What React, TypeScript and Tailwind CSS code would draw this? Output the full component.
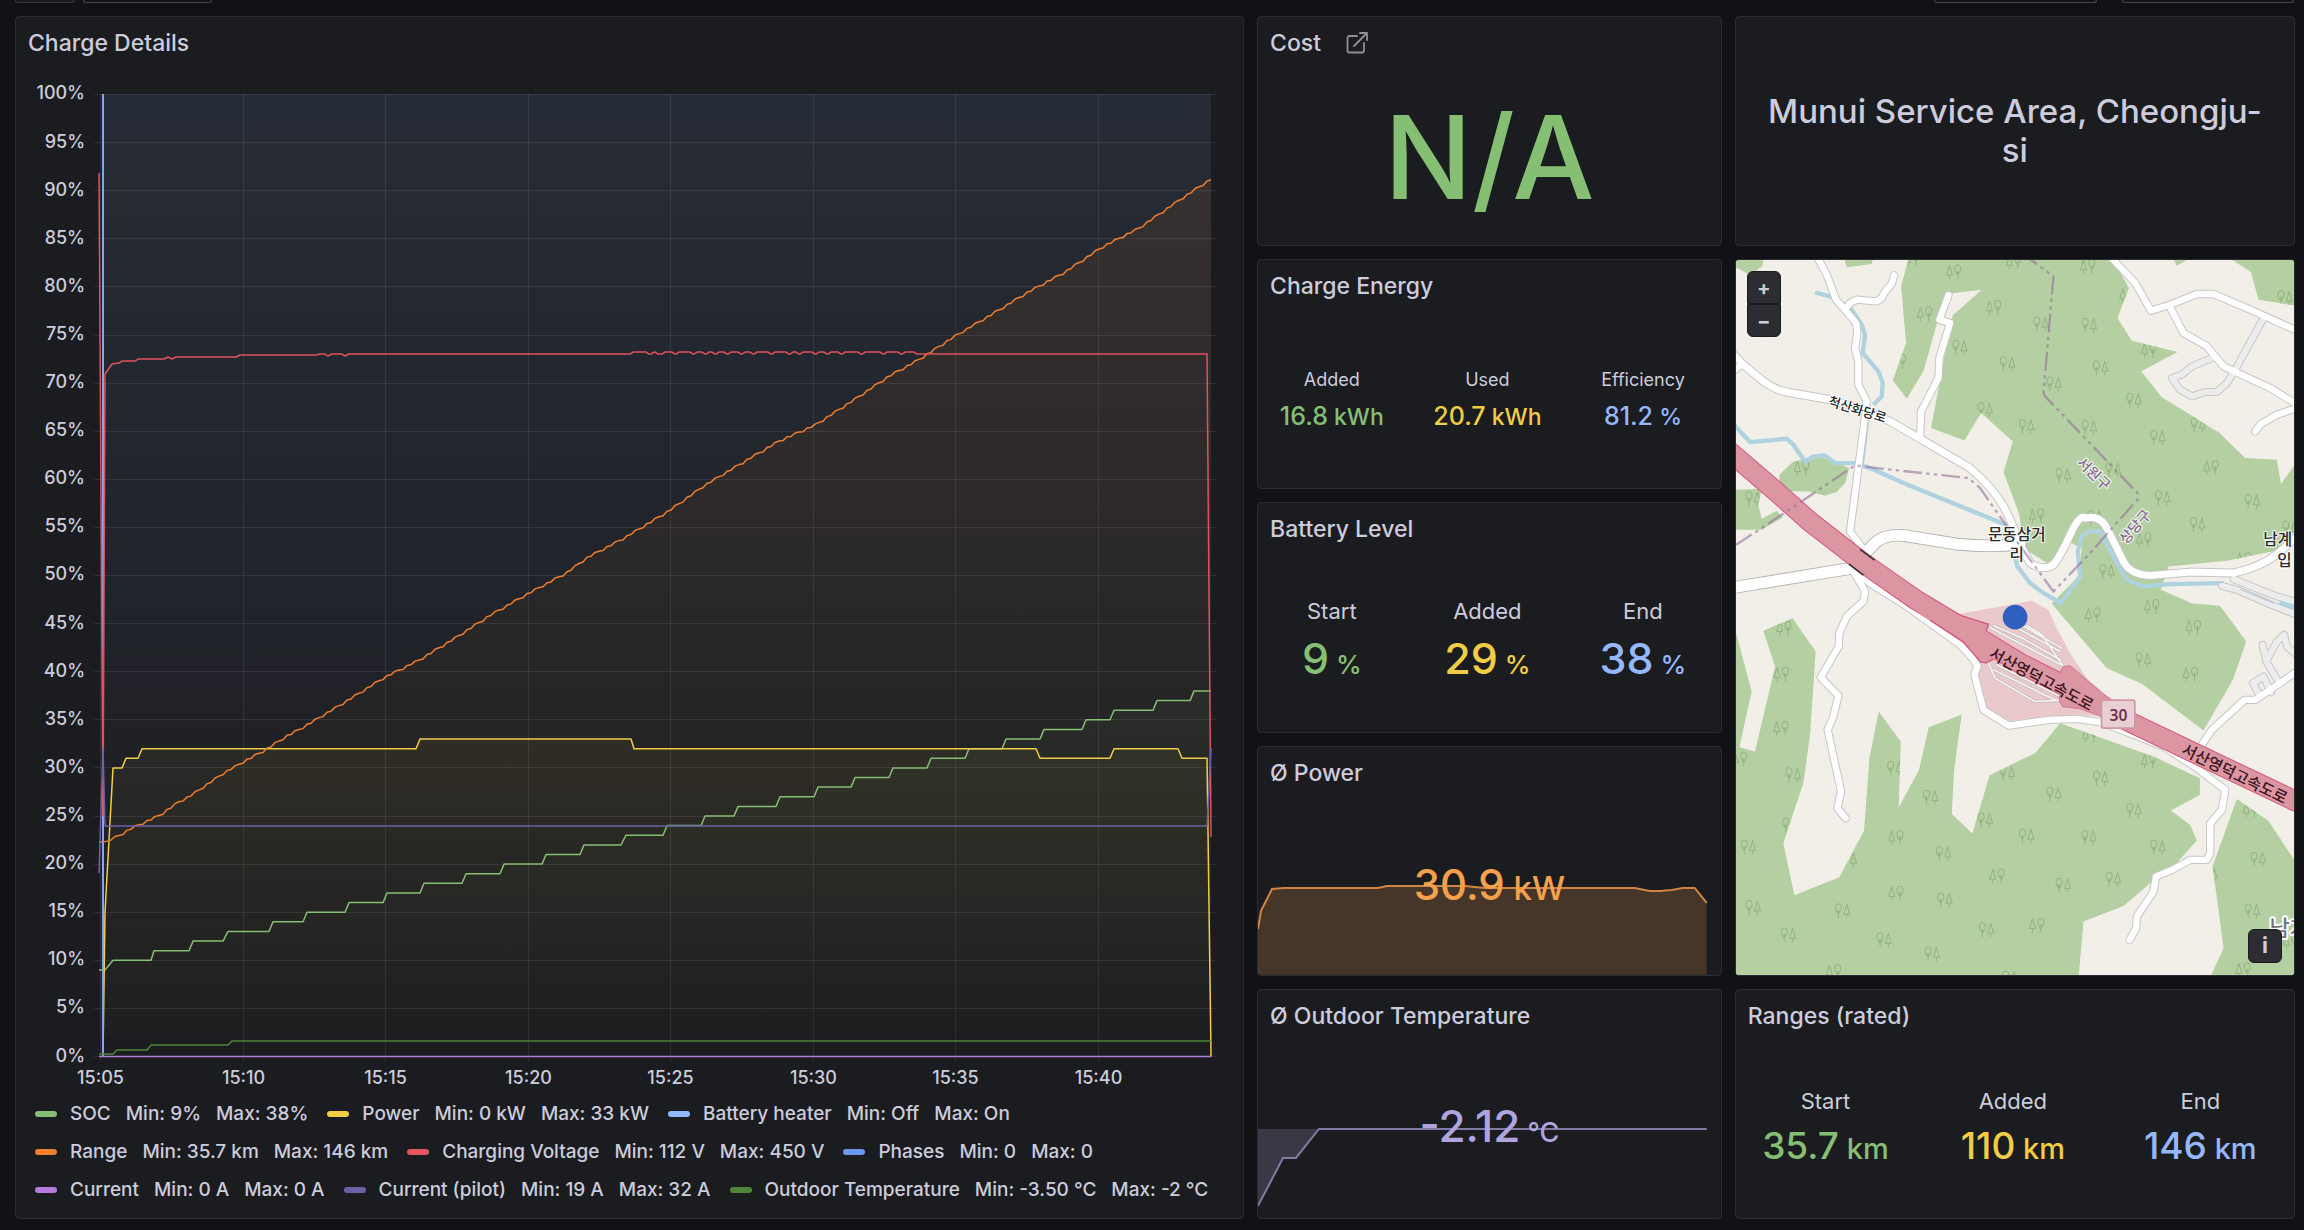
import React from "react";

const FONT = "font-['Inter','Noto_Sans_CJK_KR',sans-serif]";
const KR = "'Noto Sans CJK KR', sans-serif";

type PanelProps = {
  title?: string;
  action?: React.ReactNode;
  className: string;
  children: React.ReactNode;
};

function Panel({ title, action, className, children }: PanelProps) {
  return (
    <section className={`relative flex min-w-0 flex-col overflow-hidden rounded-sm border border-[#2c2d32] bg-[#1b1c1f] ${className}`}>
      {title && (
        <header className="flex h-[52px] shrink-0 items-center gap-6 px-3">
          <h2 className="text-[23px] font-medium leading-8 text-[#ccccdc]">{title}</h2>
          {action}
        </header>
      )}
      {children}
    </section>
  );
}

/* ---------- Time series ---------- */

const TOP = 94.5;
const BOTTOM = 1056.5;
const pct = (v: number) => BOTTOM - (v * (BOTTOM - TOP)) / 100;
type Pt = [number, number];
const line = (pts: Pt[]) => "M" + pts.map(([x, y]) => `${x} ${y.toFixed(1)}`).join("L");
const area = (pts: Pt[]) => `${line(pts)}L${pts[pts.length - 1][0]} ${BOTTOM}L${pts[0][0]} ${BOTTOM}Z`;

const socSteps: [number, number, number][] = [
  [9, 99, 105], [10, 113, 151], [11, 154, 189], [12, 193, 223], [13, 228, 269], [14, 273, 303],
  [15, 307, 345], [16, 349, 383], [17, 387, 420], [18, 424, 462], [19, 466, 500], [20, 504, 542],
  [21, 546, 580], [22, 584, 621], [23, 626, 663], [24, 667, 701], [25, 705, 734], [26, 738, 776],
  [27, 780, 814], [28, 818, 851], [29, 855, 889], [30, 893, 927], [31, 931, 965], [32, 969, 1002],
  [33, 1006, 1040], [34, 1044, 1082], [35, 1086, 1110], [36, 1114, 1153], [37, 1157, 1190], [38, 1194, 1211],
];
const soc: Pt[] = socSteps.flatMap(([v, a, b]): Pt[] => [[a, pct(v)], [b, pct(v)]]);

const power: Pt[] = (
  [
    [103, 0], [105, 15], [113, 30], [122, 30], [126, 31], [138, 31], [142, 32], [416, 32], [420, 33],
    [631, 33], [634, 32], [1036, 32], [1040, 31], [1110, 31], [1114, 32], [1178, 32], [1182, 31],
    [1207, 31], [1211, 0],
  ] as Pt[]
).map(([x, v]): Pt => [x, pct(v)]);

const rangeKeys: Pt[] = [
  [99, 842], [105, 842], [118, 836], [130, 829], [160, 815], [180, 801], [190, 796], [212, 781],
  [222, 774], [241, 763], [265, 750], [285, 737], [300, 729], [320, 717], [340, 705], [385, 677],
  [419, 660], [455, 638], [492, 614], [529, 593], [566, 573], [588, 557], [624, 538], [670, 510],
  [705, 485], [735, 467], [779, 441], [815, 425], [852, 401], [889, 376], [918, 360], [955, 336],
  [992, 314], [1028, 292], [1065, 272], [1102, 247], [1139, 228], [1175, 203], [1197, 188], [1211, 179],
];
function stepped(keys: Pt[]): Pt[] {
  const out: Pt[] = [];
  const wobble = [0, 1.4, -0.6, 0.8, -0.9];
  let i = 0;
  for (let x = keys[0][0], n = 0; x <= 1211; x += 4, n++) {
    while (i < keys.length - 2 && keys[i + 1][0] < x) i++;
    const [x0, y0] = keys[i];
    const [x1, y1] = keys[i + 1];
    out.push([x, y0 + ((y1 - y0) * (x - x0)) / (x1 - x0) + (n > 2 ? wobble[n % 5] : 0)]);
  }
  return out;
}
const range = stepped(rangeKeys);

const ripple: Pt[] = [
  630, 646, 651, 655, 662, 672, 676, 690, 694, 702, 706, 712, 716, 724, 728, 738, 742, 750, 754, 768,
  772, 786, 790, 796, 800, 812, 816, 824, 828, 838, 842, 858, 862, 880, 884, 898, 902, 914,
].flatMap((x, i): Pt[] => (i % 2 ? [[x, 352], [x + 3, 354]] : [[x, 354], [x + 3, 352]]));
const voltage: Pt[] = [
  [99, 173], [103, 816], [105, 374], [112, 364], [119, 363], [122, 361], [135, 361], [138, 359],
  [164, 359], [168, 357], [172, 359], [176, 357], [236, 357], [240, 355], [316, 355], [320, 354],
  [325, 354], [328, 356], [332, 354], [342, 354], [345, 356], [349, 354], ...ripple, [1207, 354], [1211, 837],
];
const pilot: Pt[] = [[99, 873], [103, 748], [105, 826], [1207, 826], [1211, 748]];
const outdoor: Pt[] = [[99, 1054], [113, 1054], [117, 1050], [147, 1050], [151, 1045], [228, 1045], [232, 1041], [1211, 1041]];
const times = ["15:05", "15:10", "15:15", "15:20", "15:25", "15:30", "15:35", "15:40"];
const timeX = [100.5, 243.5, 385.5, 528.5, 670.5, 813.5, 955.5, 1098.5];

function Gradient({ id, color, from, y }: { id: string; color: string; from: number; y: number }) {
  return (
    <linearGradient id={id} gradientUnits="userSpaceOnUse" x1="0" x2="0" y1={y} y2={BOTTOM}>
      <stop offset="0" stopColor={color} stopOpacity={from} />
      <stop offset="1" stopColor={color} stopOpacity="0" />
    </linearGradient>
  );
}

function ChargeChart() {
  return (
    <svg viewBox="16 69 1227 1025" className="block h-auto w-full" fill="none" role="img" aria-label="Charge Details">
      <defs>
        <Gradient id="gHeater" color="#8ab8ff" from={0.1} y={94} />
        <Gradient id="gRange" color="#ff780a" from={0.08} y={179} />
        <Gradient id="gPower" color="#fade2a" from={0.05} y={739} />
        <Gradient id="gSoc" color="#73bf69" from={0.05} y={691} />
      </defs>
      <g stroke="#ccccdc" strokeOpacity="0.11">
        {Array.from({ length: 21 }, (_, i) => {
          const y = Math.round(pct(i * 5) - 0.5) + 0.5;
          return <path key={i} d={`M94 ${y}H1216`} />;
        })}
        {timeX.map((x) => (
          <path key={x} d={`M${x} 94V1062`} />
        ))}
      </g>
      <path d={`M103 94H1211V${BOTTOM}H103Z`} fill="url(#gHeater)" />
      <path d={area(range)} fill="url(#gRange)" />
      <path d={area(power)} fill="url(#gPower)" />
      <path d={area(soc)} fill="url(#gSoc)" />
      <g strokeWidth="1.5" strokeLinejoin="round">
        <path d={line(soc)} stroke="#85bf73" />
        <path d={line(power)} stroke="#f0cd45" />
        <path d={`M103 94V${BOTTOM}`} stroke="#82a8f0" strokeWidth="2" />
        <path d={line(range)} stroke="#ee7d2f" />
        <path d={line(voltage)} stroke="#e0525c" />
        <path d={line(pilot)} stroke="#6e60a4" />
        <path d={line(outdoor)} stroke="#4c8438" />
        <path d={`M99 ${BOTTOM}H1211`} stroke="#b07ad8" />
      </g>
      <g fill="#ccccdc" fontSize="18" fontWeight="500" fontFamily="Inter, sans-serif">
        {Array.from({ length: 21 }, (_, i) => (
          <text key={i} x="85" y={pct(i * 5) + 5} textAnchor="end">{`${i * 5}%`}</text>
        ))}
        {times.map((t, i) => (
          <text key={t} x={timeX[i]} y="1084" textAnchor="middle">{t}</text>
        ))}
      </g>
    </svg>
  );
}

const legend = [
  { name: "SOC", min: "9%", max: "38%", color: "bg-[#85bf73]" },
  { name: "Power", min: "0 kW", max: "33 kW", color: "bg-[#f0cd45]" },
  { name: "Battery heater", min: "Off", max: "On", color: "bg-[#94b8fb]" },
  { name: "Range", min: "35.7 km", max: "146 km", color: "bg-[#f08030]" },
  { name: "Charging Voltage", min: "112 V", max: "450 V", color: "bg-[#e3555f]" },
  { name: "Phases", min: "0", max: "0", color: "bg-[#6a98f0]" },
  { name: "Current", min: "0 A", max: "0 A", color: "bg-[#b47bdc]" },
  { name: "Current (pilot)", min: "19 A", max: "32 A", color: "bg-[#6e60a4]" },
  { name: "Outdoor Temperature", min: "-3.50 °C", max: "-2 °C", color: "bg-[#4f873a]" },
];

function Legend() {
  return (
    <ul className="flex flex-wrap gap-x-[19px] px-[19px] pt-px text-[19px] font-medium text-[#ccccdc]">
      {legend.map((s) => (
        <li key={s.name} className="flex h-[38px] items-center whitespace-nowrap">
          <span className={`mr-[13px] h-[6px] w-[22px] rounded-full ${s.color}`} />
          <button type="button" className="mr-[15px]">{s.name}</button>
          <span className="mr-[15px]">Min: {s.min}</span>
          <span>Max: {s.max}</span>
        </li>
      ))}
    </ul>
  );
}

/* ---------- Stat panels ---------- */

type Stat = { label: string; value: string; unit: string; color: string };
type StatSize = { label: string; value: string; unit: string };

const sizes: Record<"small" | "large" | "medium", StatSize> = {
  small: { label: "text-[18px] leading-7", value: "text-[25px] leading-[44px]", unit: "text-[23px]" },
  large: { label: "text-[22px] leading-8", value: "text-[43px] leading-[62px]", unit: "text-[26px]" },
  medium: { label: "text-[22px] leading-8", value: "text-[37px] leading-[58px]", unit: "text-[29px]" },
};

function StatRow({ stats, size }: { stats: Stat[]; size: keyof typeof sizes }) {
  const s = sizes[size];
  return (
    <dl className="-ml-1 grid flex-1 grid-cols-3 content-center pt-1 text-center">
      {stats.map((st) => (
        <div key={st.label}>
          <dt className={`text-[#ccccdc] ${s.label}`}>{st.label}</dt>
          <dd className={`whitespace-pre font-medium ${s.value} ${st.color}`}>
            {st.value}
            <span className={s.unit}> {st.unit}</span>
          </dd>
        </div>
      ))}
    </dl>
  );
}

const GREEN = "text-[#85bf73]";
const YELLOW = "text-[#f0cd45]";
const BLUE = "text-[#94b8fb]";

function ExternalLinkIcon() {
  return (
    <svg viewBox="0 0 24 24" className="size-6" fill="none" stroke="#8f909b" strokeWidth="1.8" strokeLinecap="round" strokeLinejoin="round">
      <path d="M12 5H4.500a2 2 0 0 0-2 2v12.500a2 2 0 0 0 2 2H17a2 2 0 0 0 2-2V12M9 15 22 2M15 2h7v7" />
    </svg>
  );
}

/* ---------- Map ---------- */

const forests = [
  "M18 15H100L97 35 60 62 18 38Z",
  "M343 15 350 38 425 28 428 15Z",
  "M535 15 513 95 528 265 488 377 530 432 580 350 625 190 648 118 755 105 668 182 640 320 603 520 703 557 753 475 848 560 820 652 868 780 880 880 950 925 985 905 1023 865 1055 880 1045 965 965 1045 980 1065 1130 1240 1235 1287 1420 1427 1508 1275 1548 1160 1478 1065 1468 1053 1385 1045 1292 1005 1315 935 1490 918 1640 887 1692 830V632L1652 688 1640 615 1545 610 1468 535 1380 480 1295 428 1233 350 1342 292 1205 258 1162 190 1196 100 1150 15Z",
  "M1505 15 1562 52 1585 135 1692 153V15Z",
  "M1330 15 1340 33 1372 15Z",
  "M190 620 270 605 358 640 345 685 320 712 285 723 235 710 150 708 148 660Z",
  "M18 705 95 702 85 750 95 792 140 768 158 788 95 825H18Z",
  "M18 1133 65 1310 28 1477 75 1490 135 1235 100 1128 188 1090 257 1190 240 1440 220 1585 160 1765 193 1921 328 1867 402 1727 418 1510 446 1370 512 1460 506 1658 567 1545 596 1417 695 1379 672 1545 665 1677 727 1736 778 1562 870 1516 915 1495 990 1405 1270 1505 1409 1570V1620L1322 1667 1380 1710 1400 1757 1320 1845 1260 1885 1180 1953 1060 2000 1046 2160H18Z",
  "M1520 1632 1615 1698 1692 1815V2160H1443L1480 2080 1465 1965 1447 1835Z",
];

const rivers = [
  "M255 113 310 128 365 165 395 210 405 240 398 295 445 350 458 385 455 425 430 450",
  "M10 508 60 562 170 552 190 570 225 620 250 605 285 602 315 625 375 625 420 640 520 685 840 815 855 840",
  "M855 910 862 935 900 985 940 1015 992 1045 1050 965 1043 890 1055 845 1075 830H1110L1130 870 1190 975 1240 995 1320 988 1480 985",
];

const minorRoads = [
  "M258 0 290 60 318 135 345 165 378 205 382 230 375 280 385 320V390L410 440 403 500 360 830 405 890",
  "M345 165 360 145 380 135 440 140 455 130 465 110 485 88 492 62",
  "M0 355 38 328",
  "M570 552 573 470 625 370 628 310 660 205 628 195 655 122",
  "M370 950 405 1010 400 1040 350 1085 328 1135 326 1175 272 1268 325 1322 310 1385 293 1425 333 1610 322 1660 347 1690",
  "M370 950 430 992 520 1048 600 1105 690 1170 725 1208 742 1234 733 1260 760 1365 835 1412 960 1395 1040 1392 1110 1402 1180 1428 1300 1475 1400 1540 1485 1605 1475 1665 1440 1705V1795L1430 1815H1380L1325 1845 1277 1865 1270 1910 1220 1985 1218 2020 1198 2055",
  "M1135 0 1215 85 1262 168 1320 150 1400 118H1450L1560 165 1700 228",
  "M1318 155 1360 235 1430 275 1480 335 1620 400 1700 449",
  "M1575 530 1592 508 1640 480 1700 460",
  "M1415 1470 1445 1425 1543 1335H1575L1700 1250",
];
const mainRoads = [
  "M0 288 38 328 100 380Q140 408 170 412L300 435 400 465 480 500 570 552 720 640Q790 700 820 755T865 860L900 925Q940 950 970 930 990 905 1020 840T1065 790Q1110 780 1130 820L1180 920Q1200 960 1260 962L1380 952 1510 955Q1600 935 1650 890L1700 845",
];
const wideRoads = ["M400 900 440 860Q470 838 520 842L680 868Q780 878 870 868", "M0 1000 355 942 385 938"];
const greyRoads = [
  "M1600 190 1515 345 1490 385 1460 412 1425 412 1385 425 1350 405 1325 370 1355 360 1385 335 1450 308",
  "M1475 993 1520 1005 1635 1055 1700 1080",
  "M1510 973 1640 1025 1700 1042",
  "M1590 1325 1568 1285 1600 1265 1622 1312",
  "M1642 1275 1608 1220 1597 1170",
  "M1608 1218 1640 1160 1662 1140 1670 1175 1700 1200",
];

const roundFirst: Pt[] = [
  [690, 278], [833, 327], [766, 465], [70, 732], [933, 208], [1078, 212], [1112, 340], [972, 388],
  [1212, 437], [890, 515], [1078, 518], [1284, 548], [1000, 662], [1150, 645], [1298, 730], [1567, 740],
  [1403, 810], [1131, 950], [1665, 130], [1095, 788], [190, 1560], [56, 1777], [70, 1958], [176, 2040],
  [338, 1968], [463, 2055], [607, 2097], [602, 1627], [641, 1796], [645, 1935], [770, 2025], [766, 1695],
  [495, 1540], [832, 1555], [358, 1815], [1240, 1215], [1112, 1570], [972, 1618], [1212, 1667],
  [890, 1743], [1077, 1748], [1284, 1777], [1150, 1873], [1000, 1891], [1585, 1813], [1567, 1968],
  [1440, 1860], [1405, 510], [840, 2170], [180, 1710], [1680, 820],
];
const pineFirst: Pt[] = [
  [670, 52], [583, 178], [790, 158], [214, 640], [1072, 35], [1255, 287], [1442, 638], [919, 783],
  [1240, 855], [1264, 1055], [1087, 1080], [161, 1120], [153, 1258], [152, 1420], [28, 1513], [310, 2150],
  [497, 1748], [800, 1863], [497, 1915], [1389, 1117], [1380, 1258], [1255, 1518], [919, 2011],
  [1538, 2145], [545, 12], [850, 22], [505, 320], [1078, 1440], [1190, 122], [1540, 915], [1560, 1665], [1680, 2060],
];

const HIGHWAY = "M-10 583 130 703 240 801 400 925 560 1037 690 1115 780 1170 870 1225 990 1286 1110 1348 1180 1393 1692 1637 1720 1650";

function MapView() {
  return (
    <svg viewBox="18 15 1674 2145" preserveAspectRatio="xMidYMid slice" className="absolute inset-0 size-full" fill="none" strokeLinejoin="round">
      <defs>
        <clipPath id="forest">
          <path d={forests.join("")} />
        </clipPath>
        <g id="treeRound">
          <path d="M0 22V-4M-5 4 0 9 5 4" />
          <ellipse cx="0" cy="-9" rx="9" ry="12" />
        </g>
        <path id="treePine" d="M0 22V10M0-20-9 10H9Z" />
      </defs>
      <rect x="0" y="0" width="1720" height="2180" fill="#f2efe9" />
      <path d={forests.join("")} fill="#b4cfa1" />
      <path d="M640 1070 690 1077 840 1050 905 1038 955 1065 980 1120 1020 1195 1080 1285 1115 1385 1040 1380 840 1405 765 1360 740 1250 740 1160Z" fill="#e9c9cb" />
      <g clipPath="url(#forest)" stroke="#93b484" strokeWidth="3">
        {roundFirst.map(([x, y]) => (
          <React.Fragment key={`${x}-${y}`}>
            <use href="#treeRound" x={x - 13} y={y} />
            <use href="#treePine" x={x + 12} y={y} />
          </React.Fragment>
        ))}
        {pineFirst.map(([x, y]) => (
          <React.Fragment key={`${x}-${y}`}>
            <use href="#treePine" x={x - 12} y={y} />
            <use href="#treeRound" x={x + 13} y={y} />
          </React.Fragment>
        ))}
      </g>
      <g stroke="#aed3df" strokeWidth="13">
        {rivers.map((d) => (
          <path key={d} d={d} />
        ))}
        <path d="M415 490 398 628" strokeWidth="8" />
      </g>
      <g strokeLinecap="round">
        <g stroke="#c6c6c6">
          {greyRoads.map((d) => <path key={d} d={d} strokeWidth="24" />)}
          {minorRoads.map((d) => <path key={d} d={d} strokeWidth="25" />)}
          {mainRoads.map((d) => <path key={d} d={d} strokeWidth="27" />)}
          {wideRoads.map((d) => <path key={d} d={d} strokeWidth="38" stroke="#b0b0ae" />)}
        </g>
        {greyRoads.map((d) => <path key={d} d={d} strokeWidth="18" stroke="#ececec" />)}
        <g stroke="#fff">
          {minorRoads.map((d) => <path key={d} d={d} strokeWidth="19" />)}
          {mainRoads.map((d) => <path key={d} d={d} strokeWidth="21" />)}
          {wideRoads.map((d) => <path key={d} d={d} strokeWidth="33" />)}
        </g>
      </g>
      <path d="M1530 1003 1630 1045" stroke="#b9cdd2" strokeWidth="4" />
      <path d="M1648 1044 1700 1060" stroke="#aed3df" strokeWidth="14" />
      <g strokeLinecap="round">
        {["#c4b9b9", "#f7f5f4"].map((c, i) => (
          <path
            key={c}
            stroke={c}
            strokeWidth={i ? 5 : 9}
            d="M780 1118 840 1150 990 1228M790 1112 880 1152 990 1215M840 1108 990 1190M870 1108 995 1180M890 1112 935 1140 998 1232M775 1225 795 1270 915 1340 990 1336M790 1245 980 1338M800 1230 985 1322"
          />
        ))}
      </g>
      <path d={HIGHWAY} stroke="#d4577f" strokeWidth="62" />
      <path d="M640 1066 775 1108 767 1132 860 1190 800 1210 768 1224 752 1222 700 1162 560 1072Z" fill="#dc96a2" />
      <path d="M640 1066 775 1108 767 1132M600 1096 700 1162 752 1222 768 1224 790 1212" stroke="#d4577f" strokeWidth="4" />
      <path d="M990 1250 1000 1235 1020 1233 1135 1330 1180 1400 1130 1390 1050 1362 998 1356 988 1340Z" fill="#dc96a2" stroke="#d27a90" strokeWidth="3" />
      <path d={HIGHWAY} stroke="#dc96a2" strokeWidth="56" />
      <path d="M390 884 434 916M357 928 400 961" stroke="#333" strokeWidth="5" />
      <path
        d="M18 870 95 820 200 750 375 632 440 640 715 670 750 700 830 815 860 860 970 1010 1075 900 1150 815 1222 735V715L945 425 940 415 970 65 895 10"
        stroke="#94709b"
        strokeOpacity="0.6"
        strokeWidth="7"
        strokeDasharray="56 13 10 13 10 13"
      />
      <g fontFamily={KR} fontWeight="500" paintOrder="stroke" stroke="#fff" strokeOpacity="0.8" strokeWidth="7" textAnchor="middle">
        <g fill="#222" fontSize="39">
          <text transform="translate(378 478) rotate(17)">척산화당로</text>
        </g>
        <g fill="#2a2a2a" fontSize="47">
          <text x="860" y="855">문동삼거</text>
          <text x="860" y="917">리</text>
          <text x="1599" y="871" textAnchor="start">남계</text>
          <text x="1641" y="933" textAnchor="start">입</text>
        </g>
        <g fill="#866b91" fontSize="43">
          <text transform="translate(1080 668) rotate(44)">서원구</text>
          <text transform="translate(1226 826) rotate(-49)">상당구</text>
        </g>
        <text x="1618" y="2042" fill="#777" fontSize="66" strokeWidth="12" strokeOpacity="1" textAnchor="start">남계</text>
      </g>
      <g fontFamily={KR} fontWeight="500" fill="#3a1420" fontSize="47" textAnchor="middle">
        <text transform="translate(926 1288) rotate(28)">서산영덕고속도로</text>
        <text transform="translate(1506 1572) rotate(26)">서산영덕고속도로</text>
      </g>
      <rect x="1114" y="1336" width="100" height="84" rx="7" fill="#e8cfd3" stroke="#cf98a4" strokeWidth="5" />
      <text x="1165" y="1397" textAnchor="middle" fill="#70304c" fontFamily="Noto Sans, sans-serif" fontWeight="600" fontSize="47">30</text>
      <circle cx="855" cy="1087" r="37" fill="#3060bf" />
    </svg>
  );
}

const mapButton = "flex items-center justify-center border border-[#1a1b1f] bg-[#2c2d33] font-bold text-[#ccccdc]";

export default function App() {
  return (
    <div className={`flex min-h-screen flex-col bg-[#111216] ${FONT}`}>
      <div className="flex h-4 items-start justify-between pl-[15px] pr-[10px]">
        <div className="flex gap-2">
          <div className="h-[3px] w-[60px] rounded-b-sm border border-t-0 border-[#35363b] bg-[#1b1c1f]" />
          <div className="h-[3px] w-[129px] rounded-b-sm border border-t-0 border-[#47484d]" />
        </div>
        <div className="flex gap-[25px]">
          <div className="h-[3px] w-[163px] rounded-b-sm border border-t-0 border-[#47484d]" />
          <div className="h-[3px] w-[172px] rounded-b-sm border border-t-0 border-[#47484d]" />
        </div>
      </div>

      <main className="grid flex-1 grid-cols-24 grid-rows-[repeat(5,minmax(230px,1fr))] gap-[13px] pb-[11px] pl-[15px] pr-[9px]">
        <Panel title="Charge Details" className="col-span-13 row-span-5">
          <ChargeChart />
          <Legend />
        </Panel>

        <Panel
          title="Cost"
          className="col-span-5"
          action={
            <a href="#cost" aria-label="Cost">
              <ExternalLinkIcon />
            </a>
          }
        >
          <p className="flex flex-1 items-center justify-center text-[116px] font-medium leading-[120px] text-[#85bf73]">N/A</p>
        </Panel>

        <Panel className="col-span-6">
          <h1 className="flex flex-1 items-center justify-center px-7 text-center text-[33px] font-medium leading-[39px] text-[#ccccdc]">
            Munui Service Area, Cheongju-si
          </h1>
        </Panel>

        <Panel title="Charge Energy" className="col-span-5">
          <StatRow
            size="small"
            stats={[
              { label: "Added", value: "16.8", unit: "kWh", color: GREEN },
              { label: "Used", value: "20.7", unit: "kWh", color: YELLOW },
              { label: "Efficiency", value: "81.2", unit: "%", color: BLUE },
            ]}
          />
        </Panel>

        <Panel className="col-span-6 row-span-3">
          <MapView />
          <div className="absolute left-[11px] top-[11px] flex w-[34px] flex-col">
            <button type="button" className={`h-[33px] rounded-t-md text-xl ${mapButton}`}>+</button>
            <button type="button" className={`h-[33px] rounded-b-md text-xl ${mapButton}`}>−</button>
          </div>
          <button type="button" className={`absolute bottom-3 right-3 size-[34px] rounded-md text-[22px] ${mapButton}`}>i</button>
        </Panel>

        <Panel title="Battery Level" className="col-span-5">
          <StatRow
            size="large"
            stats={[
              { label: "Start", value: "9", unit: "%", color: GREEN },
              { label: "Added", value: "29", unit: "%", color: YELLOW },
              { label: "End", value: "38", unit: "%", color: BLUE },
            ]}
          />
        </Panel>

        <Panel title="Ø Power" className="col-span-5">
          <svg viewBox="1258 800 463 175" className="absolute inset-x-0 bottom-0 block h-auto w-full" fill="none">
            <path d="M1258 929 1261 911 1272 889 1284 888H1378L1387 886H1465L1485 888H1635L1650 891H1660L1672 890 1683 888H1695L1707 903V975H1258Z" fill="#463529" />
            <path d="M1258 929 1261 911 1272 889 1284 888H1378L1387 886H1465L1485 888H1635L1650 891H1660L1672 890 1683 888H1695L1707 903" stroke="#d08642" strokeWidth="2" />
          </svg>
          <p className="relative flex flex-1 items-center justify-center whitespace-pre font-medium text-[#f5a04c]">
            <span className="text-[42px] leading-[60px]">30.9<span className="text-[33px]"> kW</span></span>
          </p>
        </Panel>

        <Panel title="Ø Outdoor Temperature" className="col-span-5">
          <svg viewBox="1258 1043 463 175" className="absolute inset-x-0 bottom-0 block h-auto w-full" fill="none">
            <path d="M1258 1129H1319L1296 1158H1283L1258 1206Z" fill="#3a3845" />
            <path d="M1258 1206 1283 1158H1296L1319 1129H1707" stroke="#817aa6" strokeWidth="2" />
          </svg>
          <p className="relative flex flex-1 items-center justify-center whitespace-pre font-medium text-[#b0a4df]">
            <span className="text-[44px] leading-[60px]">-2.12<span className="text-[27px]"> °C</span></span>
          </p>
        </Panel>

        <Panel title="Ranges (rated)" className="col-span-6">
          <StatRow
            size="medium"
            stats={[
              { label: "Start", value: "35.7", unit: "km", color: GREEN },
              { label: "Added", value: "110", unit: "km", color: YELLOW },
              { label: "End", value: "146", unit: "km", color: BLUE },
            ]}
          />
        </Panel>
      </main>
    </div>
  );
}
